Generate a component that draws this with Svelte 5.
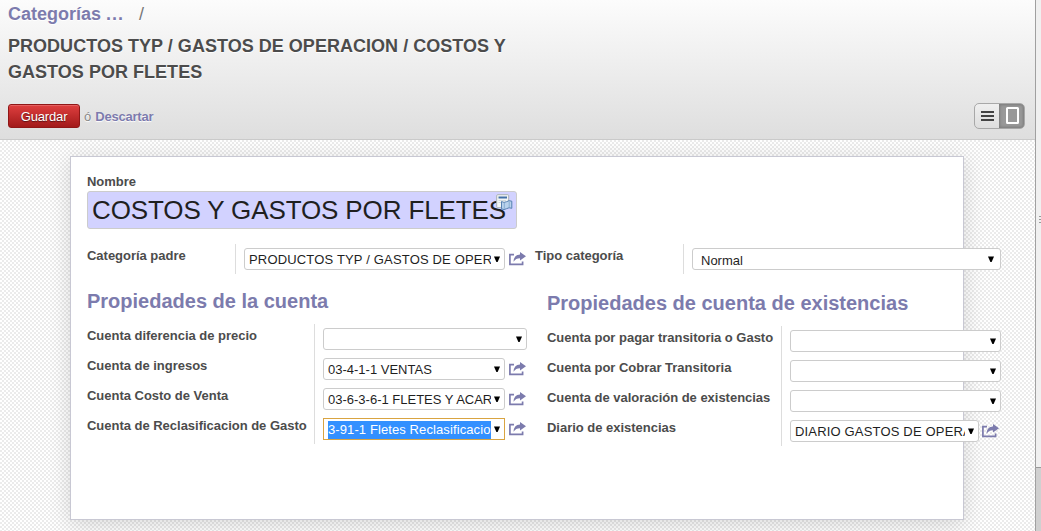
<script>
  const account = [
    { label: 'Cuenta diferencia de precio', value: '' },
    { label: 'Cuenta de ingresos', value: '03-4-1-1 VENTAS', open: true },
    { label: 'Cuenta Costo de Venta', value: '03-6-3-6-1 FLETES Y ACAR', open: true },
    { label: 'Cuenta de Reclasificacion de Gasto', value: '3-91-1 Fletes Reclasificacion', open: true, focused: true }
  ];
  const stock = [
    { label: 'Cuenta por pagar transitoria o Gasto', value: '' },
    { label: 'Cuenta por Cobrar Transitoria', value: '' },
    { label: 'Cuenta de valoración de existencias', value: '' },
    { label: 'Diario de existencias', value: 'DIARIO GASTOS DE OPERA', open: true, spaced: true }
  ];
</script>

{#snippet arrow()}
  <svg class="arrow" width="6" height="6" viewBox="0 0 6 6"><path d="M0 0.5H6L3.6 6H2.4Z" fill="#000" /></svg>
{/snippet}

{#snippet openIcon()}
  <svg class="open" width="18" height="14" viewBox="0 0 18 14">
    <path d="M5 2.6H0.9V12.4H13.6V9.6" fill="none" stroke="#7c7bad" stroke-width="1.7" />
    <path d="M11 0L17 4.3L11 8.6V6.2C8 6.2 6.2 7.2 4.6 9.8C4.6 5.6 7 2.8 11 2.6Z" fill="#7c7bad" />
  </svg>
{/snippet}

{#snippet field(f)}
  <div class="cell">
    <div class="box" class:focused={f.focused}>
      <span class="value"><span class="chars" class:selected={f.focused} class:spaced={f.spaced}>{f.value}</span></span>
      {@render arrow()}
    </div>
    {#if f.open}{@render openIcon()}{/if}
  </div>
{/snippet}

{#snippet group(title, rows, kind)}
  <section class="group {kind}">
    <h2>{title}</h2>
    {#each rows as f}
      <div class="row">
        <span class="label">{f.label}</span>
        {@render field(f)}
      </div>
    {/each}
  </section>
{/snippet}

<div class="page">
  <div class="main">
    <header>
      <div class="crumb"><a>Categorías <b>...</b></a><span>/</span></div>
      <h1>PRODUCTOS TYP / GASTOS DE OPERACION / COSTOS Y<br />GASTOS POR FLETES</h1>
      <div class="actions">
        <button class="save">Guardar</button>
        <span class="or">ó</span>
        <a class="discard">Descartar</a>
        <div class="switch">
          <div class="view">
            <svg width="13" height="10" viewBox="0 0 13 10"><path d="M0 1H13M0 5H13M0 9H13" stroke="#444" stroke-width="2" /></svg>
          </div>
          <div class="view active">
            <svg width="13" height="17" viewBox="0 0 13 17"><rect x="1" y="1" width="11" height="15" rx="0.5" fill="none" stroke="#fff" stroke-width="2" /></svg>
          </div>
        </div>
      </div>
    </header>
    <div class="canvas">
      <div class="sheet">
        <div class="label name-label">Nombre</div>
        <div class="name">
          <span>COSTOS Y GASTOS POR FLETES</span>
          <svg class="translate" width="17" height="17" viewBox="0 0 17 17">
            <rect x="0.7" y="0.7" width="12" height="13" rx="1" fill="#f4f6f5" stroke="#a9b2b4" />
            <path d="M2.5 3.5H11" stroke="#4471a8" stroke-width="2" />
            <path d="M2.5 6.5H10M2.5 8.5H6" stroke="#d3dadd" />
            <path d="M5.5 7.5Q8 9.2 10.5 7.7Q13 6 15.8 7.2V14.3Q13 13 10.5 14.7Q8 16.4 5.5 14.8Z" fill="#b9d2ec" stroke="#5580b1" />
            <path d="M8.3 9V14.8M13.2 7.5V13" stroke="#89add3" />
          </svg>
        </div>
        <div class="top">
          <div class="row parent">
            <span class="label">Categoría padre</span>
            {@render field({ value: 'PRODUCTOS TYP / GASTOS DE OPER', open: true, spaced: true })}
          </div>
          <div class="row type">
            <span class="label">Tipo categoría</span>
            <div class="cell"><div class="box native"><span class="value">Normal</span>{@render arrow()}</div></div>
          </div>
        </div>
        <div class="groups">
          {@render group('Propiedades de la cuenta', account, 'account')}
          {@render group('Propiedades de cuenta de existencias', stock, 'stock')}
        </div>
      </div>
    </div>
  </div>
  <div class="scroll"><div class="track"><i></i><i></i><i></i></div><div class="thumb"></div></div>
</div>

<style>
  :global(body) { margin: 0; overflow: hidden; }
  .page { display: flex; width: 1041px; height: 531px; overflow: hidden; font: 13px/18px "Liberation Sans", Arial, sans-serif; color: #4c4c4c; }
  .page, .page * { box-sizing: border-box; }
  svg { display: block; flex: none; }
  .main { width: 1035px; flex: none; display: flex; flex-direction: column; }
  header { height: 140px; flex: none; padding: 0 10px 0 8px; border-bottom: 1px solid #cacaca; background: linear-gradient(#fcfcfc, #dedede); text-shadow: 0 1px 1px #fff; }
  .crumb { height: 33px; padding-top: 1px; font-size: 18px; line-height: 26px; }
  .crumb a { color: #7c7bad; font-weight: bold; }
  .crumb b { letter-spacing: 1px; }
  .crumb span { margin-left: 15px; color: #777; }
  h1 { margin: 0; height: 69px; font-size: 18px; line-height: 26px; letter-spacing: 0.03px; white-space: nowrap; }
  .actions { display: flex; align-items: center; height: 28px; }
  .save { width: 72px; height: 24px; padding: 0; border: 1px solid #901717; border-radius: 3px; background: linear-gradient(#df3f3f, #a21a1a); box-shadow: inset 0 1px 0 rgba(255,255,255,.18); color: #fff; font: 13px "Liberation Sans", Arial, sans-serif; letter-spacing: -0.15px; text-shadow: 0 1px 1px rgba(0,0,0,.5); }
  .or { margin-left: 4px; padding-top: 2px; color: #888; }
  .discard { margin-left: 4px; padding-top: 2px; color: #7c7bad; font-weight: bold; letter-spacing: -0.22px; }
  .switch { display: flex; width: 51px; height: 26px; margin-left: auto; border: 1px solid #a8a8a8; border-radius: 5px; overflow: hidden; background: linear-gradient(#efefef, #dedede); }
  .view { display: flex; align-items: center; justify-content: center; width: 25px; }
  .view.active { background: #999; box-shadow: inset 0 0 3px 1px #7b7b7b; padding: 0 0 1px 1px; }
  .canvas { flex: 1; padding: 16px 71px 11px 70px; background-color: #fff; background-image: conic-gradient(#ebebeb 25%, #fff 0 50%, #ebebeb 0 75%, #fff 0); background-size: 4px 4px; }
  .sheet { width: 894px; height: 364px; padding: 16px; border: 1px solid #c8c8d3; background: #fff; box-shadow: 0 4px 20px rgba(0,0,0,.15); }
  .label { font-weight: bold; letter-spacing: -0.02px; white-space: nowrap; }
  .name-label { height: 18px; }
  .name { position: relative; width: 430px; height: 38px; padding-left: 4px; border: 1px solid #ccc; border-radius: 3px; background: #d2d2ff; color: #1f1f1f; font-size: 26px; line-height: 36px; letter-spacing: -0.12px; white-space: nowrap; }
  .translate { position: absolute; left: 408px; top: 2px; }
  .top { display: flex; margin-top: 15px; }
  .row { display: flex; height: 30px; }
  .row .label { padding-top: 3px; flex: none; }
  .cell { display: flex; flex: 1; min-width: 0; padding: 4px 0 4px 8px; border-left: 1px solid #ddd; }
  .box { display: flex; flex: 1; align-items: center; min-width: 0; height: 22px; padding: 0 4px; border: 1px solid #ccc; border-radius: 3px; background: #fff; color: #1f1f1f; }
  .value { flex: 1; min-width: 0; overflow: hidden; white-space: nowrap; line-height: 18px; padding-top: 1px; }
  .chars { display: inline-block; }
  .spaced { letter-spacing: 0.17px; }
  .selected { background: #3390ff; color: #fff; letter-spacing: 0.1px; }
  .arrow { margin-left: 3px; }
  .open { margin: 4px 0 0 4px; }
  .focused { border-color: #d9a441; border-radius: 0; }
  .parent { width: 440px; }
  .parent .label { width: 148px; }
  .type { width: 466px; margin-left: 8px; flex: none; }
  .type .label { width: 148px; }
  .native { padding: 0 6px 0 8px; }
  .native .value { padding-top: 3px; }
  .native .arrow { margin-bottom: 1px; }
  .groups { display: flex; }
  .group { flex: none; }
  h2 { margin: 0; font-size: 20px; line-height: 26px; color: #7c7bad; white-space: nowrap; }
  .account { width: 440px; padding-top: 14px; }
  .account h2 { height: 36px; }
  .account .label { width: 227px; }
  .stock { width: 454px; margin-left: 20px; padding-top: 16px; }
  .stock h2 { height: 36px; }
  .stock .label { width: 234px; }
  .stock .open { margin-left: 3px; margin-right: 1px; }
  .scroll { width: 6px; flex: none; border-left: 1px solid #a0a0a0; background: #f0f0f0; }
  .track { height: 467px; padding: 216px 0 0 3px; }
  .track i { display: block; width: 2px; height: 1px; margin-bottom: 2px; background: #999; }
  .thumb { height: 64px; border-top: 1px solid #999; background: #d0d0d0; }
</style>
